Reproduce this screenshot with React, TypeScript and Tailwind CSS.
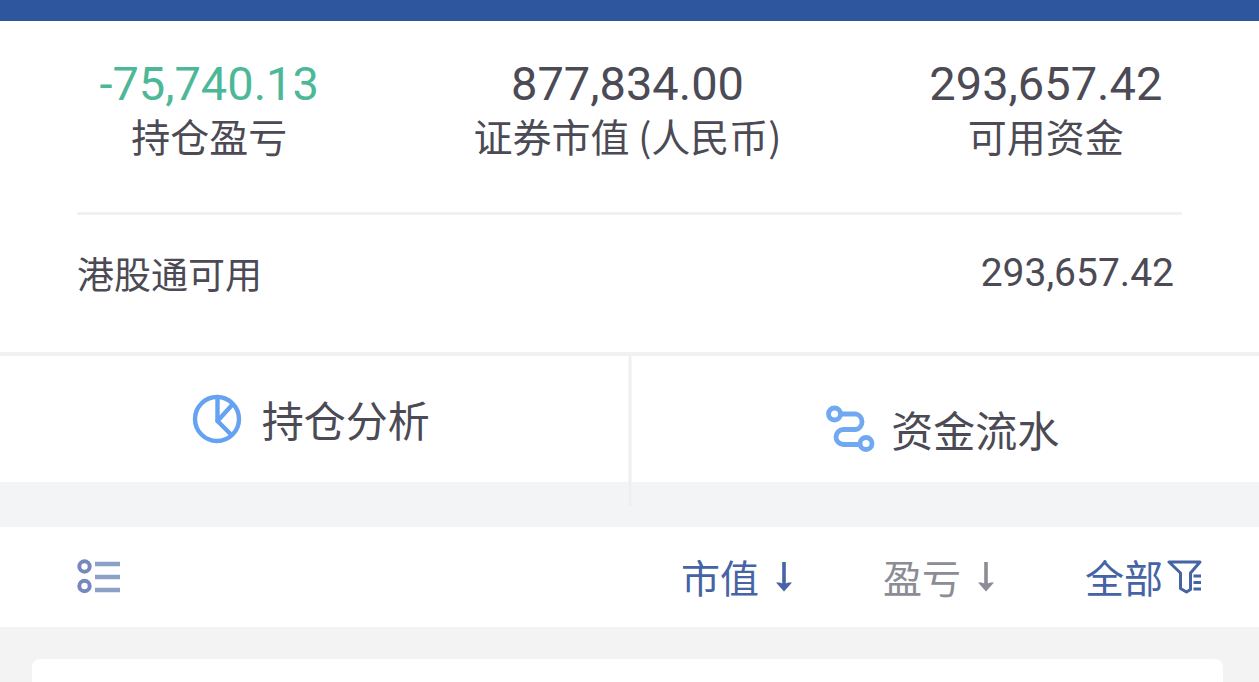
import React, { useState } from 'react';

interface SummaryItem {
  label: string;
  value: string;
  color: string;
}

const summary: SummaryItem[] = [
  { label: '持仓盈亏', value: '-75,740.13', color: 'text-[#4db898]' },
  { label: '证券市值 (人民币)', value: '877,834.00', color: 'text-[#4b4a55]' },
  { label: '可用资金', value: '293,657.42', color: 'text-[#4b4a55]' },
];

function PieIcon() {
  return (
    <svg viewBox="0 0 50 50" className="size-[50px] shrink-0" fill="none" stroke="#65a2f2" strokeWidth="4.4" strokeLinecap="round" strokeLinejoin="round" aria-hidden="true">
      <circle cx="25" cy="25" r="22" />
      <path d="M25.500 3v24l14 14" />
      <path d="M25.500 27L40 11" />
    </svg>
  );
}

function FlowIcon() {
  return (
    <svg viewBox="0 0 50 48" className="h-12 w-[50px] shrink-0" fill="none" stroke="#70a9f2" strokeWidth="4.8" strokeLinecap="round" aria-hidden="true">
      <circle cx="9.500" cy="9" r="6" />
      <circle cx="41" cy="38.500" r="6" />
      <path d="M15.500 9H31a8 8 0 0 1 0 15.500H18.500a7.500 7.500 0 0 0 0 15H35" />
    </svg>
  );
}

function ListIcon() {
  return (
    <svg viewBox="0 0 44 36" className="h-9 w-11" fill="none" aria-hidden="true">
      <g stroke="#7788bd" strokeWidth="4">
        <circle cx="7.500" cy="8.500" r="5.200" />
        <circle cx="7.500" cy="28" r="5.200" />
      </g>
      <path d="M18 6h25M18 19h25M18 32h25" stroke="#8ba1c6" strokeWidth="4.4" />
    </svg>
  );
}

function ArrowIcon() {
  return (
    <svg viewBox="0 0 18 32" className="h-8 w-[18px]" fill="none" aria-hidden="true">
      <path d="M9 2v24" stroke="currentColor" strokeWidth="3.6" />
      <path d="M1 22.500h3.500L9 24l4.500-1.500H17L9 31.500z" fill="currentColor" />
    </svg>
  );
}

function FilterIcon() {
  return (
    <svg viewBox="0 0 36 36" className="size-9" fill="none" stroke="currentColor" strokeWidth="3" strokeLinejoin="round" aria-hidden="true">
      <path d="M2 4h31l-9.500 11v16.500L19.500 34l-6-3.500V15z" />
      <path d="M26.500 18H34M26.500 24.500H34M26.500 31H34" />
    </svg>
  );
}

export default function App() {
  const [sortBy, setSortBy] = useState('value');

  return (
    <div className="flex min-h-screen flex-col overflow-hidden bg-[#f3f3f3] font-['Noto_Sans_CJK_SC',sans-serif] text-[#4b4a55]">
      <header className="h-[21px] bg-[#2e569f]" />

      {/* account summary */}
      <section className="bg-white pt-[37px]">
        <dl className="grid grid-cols-3 pr-1 text-center">
          {summary.map((item) => (
            <div key={item.label} className="flex flex-col-reverse">
              <dt className="text-[39px] leading-[50px]">{item.label}</dt>
              <dd className={`font-[Roboto,sans-serif] text-[47px] leading-[52px] ${item.color}`}>{item.value}</dd>
            </div>
          ))}
        </dl>

        <div className="mx-[77px] mt-[52px] flex items-center justify-between border-t-3 border-[#f1f1f2] pt-8 pr-2 pb-[53px] leading-[52px]">
          <span className="text-[37px]">港股通可用</span>
          <span className="font-[Roboto,sans-serif] text-[39px]">293,657.42</span>
        </div>
      </section>

      {/* shortcuts, the divider runs on into the gap below */}
      <div className="bg-[#f3f4f6] pb-[45px]">
        <nav className="relative grid grid-cols-2 border-t-4 border-[#f1f1f2] bg-white text-[42px] leading-[54px]">
          <button type="button" className="flex items-center justify-center gap-5 pt-9 pr-2 pb-9">
            <PieIcon />
            <span>持仓分析</span>
          </button>
          <button type="button" className="flex items-center justify-center gap-4 pt-[46px] pr-1 pb-[26px]">
            <FlowIcon />
            <span>资金流水</span>
          </button>
          <div className="absolute top-0 -bottom-6 left-1/2 w-[3px] -translate-x-1/2 bg-[#efeff0]" />
        </nav>
      </div>

      {/* position list toolbar */}
      <div className="flex items-center bg-white pt-[23px] pr-14 pb-[25px] pl-[77px] text-[39px] leading-[52px] text-[#4563a5]">
        <button type="button" aria-label="列表">
          <ListIcon />
        </button>
        <div className="ml-auto flex items-center gap-[90px]">
          <button
            type="button"
            onClick={() => setSortBy('value')}
            className={`flex items-center gap-4 ${sortBy === 'value' ? 'text-[#4563a5]' : 'text-[#8b8c94]'}`}
          >
            市值
            <ArrowIcon />
          </button>
          <button
            type="button"
            onClick={() => setSortBy('profit')}
            className={`flex items-center gap-4 ${sortBy === 'profit' ? 'text-[#4563a5]' : 'text-[#8b8c94]'}`}
          >
            盈亏
            <ArrowIcon />
          </button>
          <button type="button" className="flex items-center gap-1">
            全部
            <FilterIcon />
          </button>
        </div>
      </div>

      <main className="mt-8 mr-9 ml-8 flex-1 rounded-t-lg bg-white" />
    </div>
  );
}
